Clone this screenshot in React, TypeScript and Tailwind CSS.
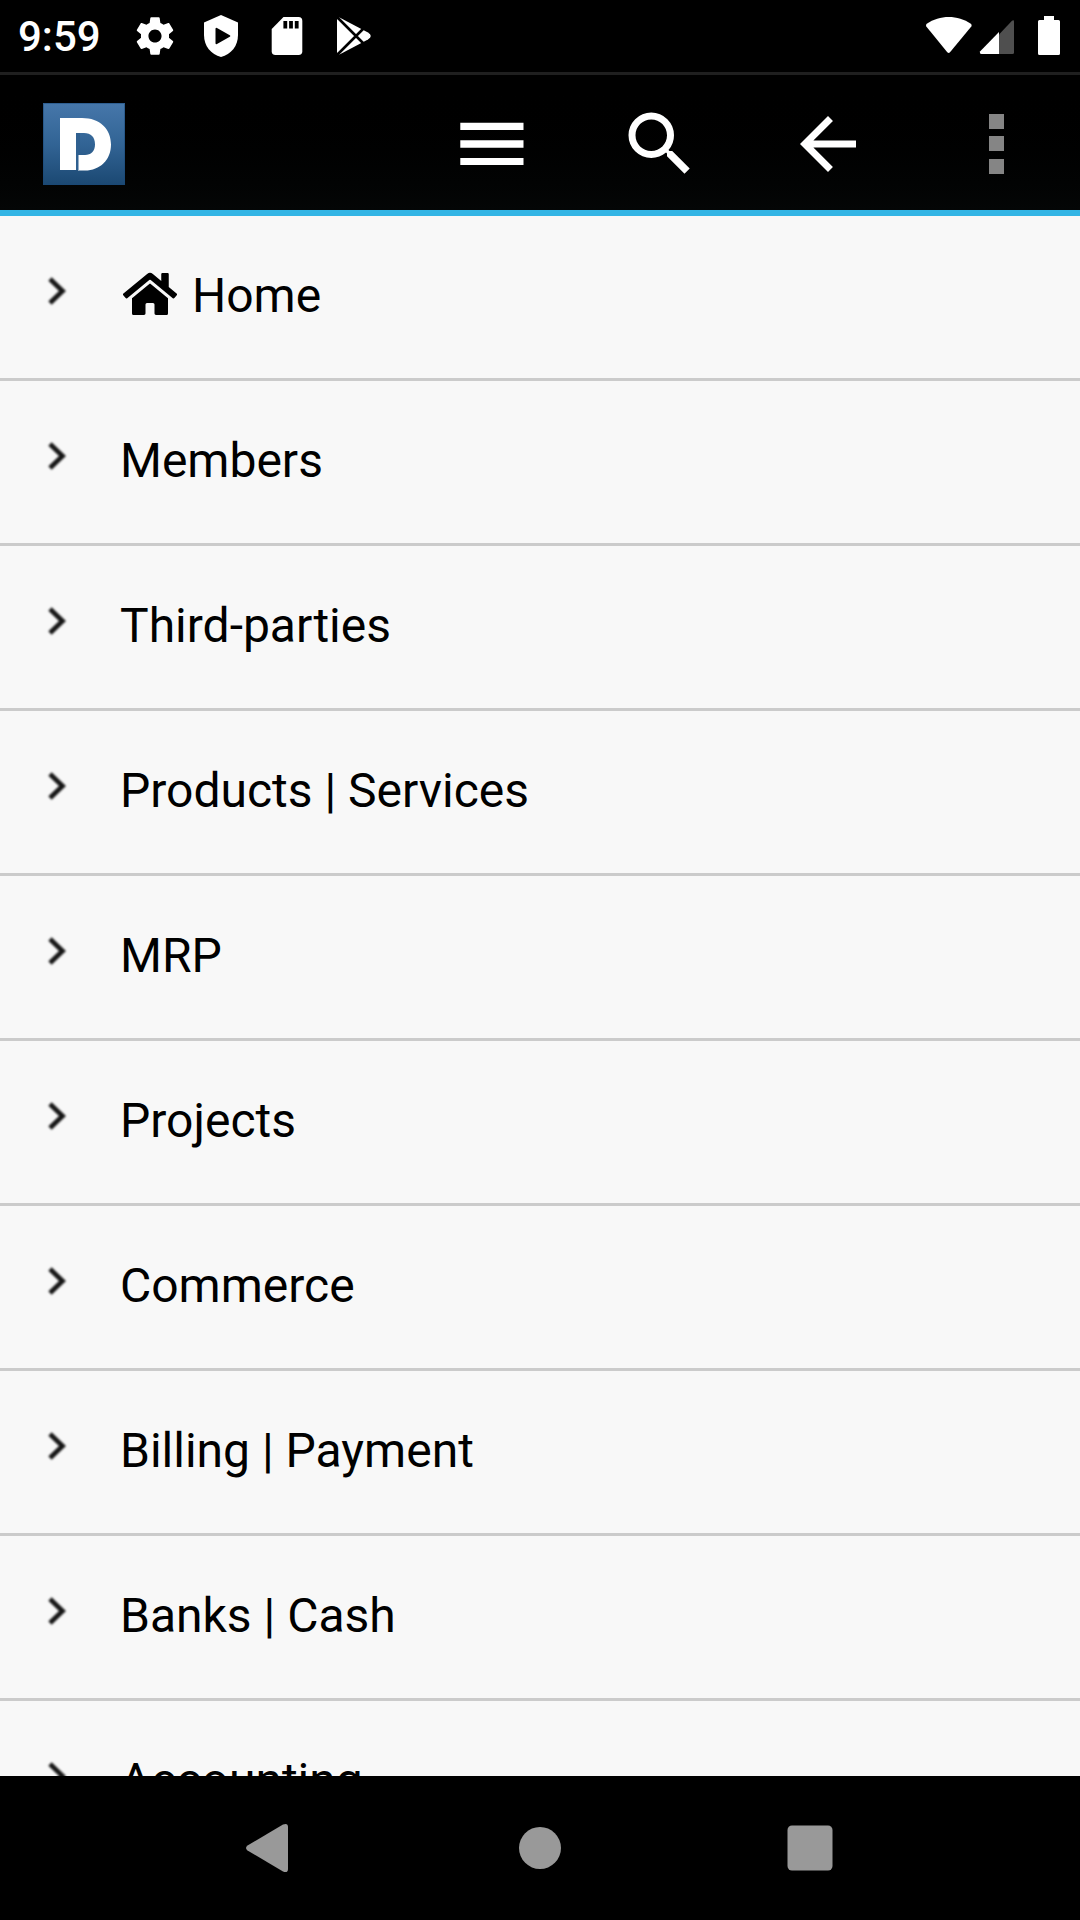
import type { ReactNode } from "react";

const modules = [
  "Home",
  "Members",
  "Third-parties",
  "Products | Services",
  "MRP",
  "Projects",
  "Commerce",
  "Billing | Payment",
  "Banks | Cash",
  "Accounting",
];

function StatusBar() {
  return (
    <header className="flex h-[75px] shrink-0 items-start justify-between border-b-[3px] border-[#1f1f1f] bg-black pl-[18px] pr-[20px]">
      <div className="flex h-[72px] items-center">
        <span className="w-[108px] pt-[2px] text-[42px] leading-[72px] font-medium text-white">9:59</span>
        <svg className="ml-[6px] h-[72px] w-[46px]" viewBox="132 0 46 72" fill="#fff">
          <g transform="translate(132.5 13.5) scale(1.875)">
            <path d="M19.43 12.98c.04-.32.07-.64.07-.98s-.03-.66-.07-.98l2.11-1.65c.19-.15.24-.42.12-.64l-2-3.46c-.12-.22-.39-.3-.61-.22l-2.49 1c-.52-.4-1.08-.73-1.69-.98l-.38-2.65C14.46 2.18 14.25 2 14 2h-4c-.25 0-.46.18-.49.42l-.38 2.65c-.61.25-1.17.59-1.69.98l-2.49-1c-.23-.09-.49 0-.61.22l-2 3.46c-.13.22-.07.49.12.64l2.11 1.65c-.04.32-.07.65-.07.98s.03.66.07.98l-2.11 1.65c-.19.15-.24.42-.12.64l2 3.46c.12.22.39.3.61.22l2.49-1c.52.4 1.08.73 1.69.98l.38 2.65c.03.24.24.42.49.42h4c.25 0 .46-.18.49-.42l.38-2.65c.61-.25 1.17-.59 1.69-.98l2.49 1c.23.09.49 0 .61-.22l2-3.46c.12-.22.07-.49-.12-.64l-2.11-1.65zM12 15.5c-1.93 0-3.5-1.57-3.5-3.5s1.57-3.5 3.5-3.5 3.5 1.57 3.5 3.5-1.57 3.5-3.5 3.5z" />
          </g>
        </svg>
        <svg className="ml-[22px] h-[72px] w-[42px]" viewBox="200 0 42 72">
          <path d="M221 15L238 22.5V35C238 46 231 54.5 221 57C211 54.5 204 46 204 35V22.5Z" fill="#fff" />
          <path d="M216.5 28.8V43.2L229.3 36Z" fill="#000" stroke="#000" strokeWidth="2" strokeLinejoin="round" />
        </svg>
        <svg className="ml-[26px] h-[72px] w-[38px]" viewBox="268 0 38 72">
          <path d="M283.5 17H298.5Q302.3 17 302.3 20.8V51.2Q302.3 55 298.5 55H275.5Q271.7 55 271.7 51.2V29Z" fill="#fff" />
          <path d="M283.4 21h3.8v7.6h-3.8zM289.1 21h3.8v7.6h-3.8zM294.8 21h3.8v7.6h-3.8z" fill="#000" />
        </svg>
        <svg className="ml-[26px] h-[72px] w-[44px]" viewBox="332 0 44 72">
          <path d="M339.5 17.5L368 32.5Q373.5 36 368 39.5L339.5 54.5L337 52.5V19.5Z" fill="#fff" />
          <path d="M335 15L365.5 45.5M335 57L365.5 26.5" stroke="#000" strokeWidth="2.6" fill="none" />
        </svg>
      </div>
      <div className="flex h-[72px] items-center">
        <svg className="h-[72px] w-[50px]" viewBox="924 0 50 72" fill="#fff">
          <path d="M926.3 26.5Q925.3 25 926.8 23.8C939.5 14.8 958 14.8 970.8 23.8Q972.3 25 971.3 26.5L950 52.2Q948.7 53.6 947.3 52.2Z" />
        </svg>
        <svg className="ml-[4px] h-[72px] w-[38px]" viewBox="978 0 38 72">
          <path d="M999 34.5L1012 20.7Q1014 19.5 1014 21.5V52.5Q1014 54 1012.5 54H999Z" fill="#4f4f4f" />
          <path d="M999 32V54H981.5Q979.5 54 980 51.5Z" fill="#fff" />
        </svg>
        <svg className="ml-[20px] h-[72px] w-[24px]" viewBox="1036 0 24 72" fill="#fff">
          <path d="M1044 16h10v4h4.5q1.5 0 1.5 1.5v32q0 1.500-1.500 1.500h-19q-1.500 0-1.500-1.500v-32q0-1.500 1.500-1.500h4.500z" />
        </svg>
      </div>
    </header>
  );
}

function Action({ children, label }: { children: ReactNode; label: string }) {
  return (
    <button aria-label={label} className="flex h-[135px] w-[168px] items-center justify-center">
      {children}
    </button>
  );
}

function Toolbar() {
  return (
    <div className="flex h-[141px] shrink-0 justify-between border-b-[6px] border-[#33b5e5] bg-linear-to-b from-black to-[#040606] pl-[43px]">
      <svg className="mt-[28px] size-[82px]" viewBox="0 0 82 82">
        <defs>
          <linearGradient id="logo-blue" x1="0" y1="0" x2="0" y2="1">
            <stop offset="0" stopColor="#4677aa" />
            <stop offset="0.5" stopColor="#326495" />
            <stop offset="1" stopColor="#1b4872" />
          </linearGradient>
        </defs>
        <rect width="82" height="82" fill="url(#logo-blue)" />
        <rect x="0.5" y="0.5" width="81" height="81" fill="none" stroke="#174878" strokeOpacity="0.5" />
        <path d="M17 15H39C57 15 68 26 68 41.5C68 57 57 67.5 42 67.5H35V52H42C48 52 52 48 52 41.5C52 34 48 30 41 30H33V67H17Z" fill="#fff" />
        <path d="M33 30V67H35.500V52H37V30Z" fill="#2f6090" />
      </svg>
      <div className="flex pt-[1.5px]">
        <Action label="Menu">
          <svg className="size-[84px]" viewBox="0 0 84 84" fill="#fff">
            <path d="M10.300 20.800h63.200v7.200h-63.200zM10.300 38.300h63.200v7.500h-63.200zM10.300 56h63.200v7h-63.200z" />
          </svg>
        </Action>
        <Action label="Search">
          <svg className="size-[84px]" viewBox="0 0 24 24" fill="#fff">
            <path d="M15.5 14h-.79l-.28-.27A6.471 6.471 0 0 0 16 9.5 6.5 6.5 0 1 0 9.5 16c1.61 0 3.09-.59 4.23-1.57l.27.28v.79l5 4.99L20.49 19l-4.99-5zm-6 0C7.01 14 5 11.99 5 9.5S7.01 5 9.5 5 14 7.01 14 9.5 11.99 14 9.5 14z" />
          </svg>
        </Action>
        <Action label="Back">
          <svg className="size-[84px]" viewBox="0 0 24 24" fill="#fff">
            <path d="M20 11H7.83l5.59-5.59L12 4l-8 8 8 8 1.41-1.41L7.83 13H20v-2z" />
          </svg>
        </Action>
        <Action label="More">
          <svg className="size-[84px]" viewBox="0 0 84 84" fill="#858585" shapeRendering="crispEdges">
            <path d="M35 12h15v15H35zM35 34h15v15H35zM35 57h15v15H35z" />
          </svg>
        </Action>
      </div>
    </div>
  );
}

function Row({ name }: { name: string }) {
  return (
    <li className="flex h-[165px] shrink-0 items-start border-b-[3px] border-[#cbcbcb] pl-[45px]">
      <svg className="mt-[58px] h-[34px] w-[26px] blur-[0.8px]" viewBox="0 0 26 34" fill="none" stroke="#161616" strokeWidth="4.8">
        <path d="M5 5L17.500 17L5 29" />
      </svg>
      <div className="ml-[49px] flex items-start">
        {name === "Home" && (
          <svg className="mt-[54px] mr-[15px] ml-[3px] h-[48px] w-[54px]" viewBox="0 0 576 512" fill="#000">
            <path d="M280.37 148.26L96 300.11V464a16 16 0 0 0 16 16l112.06-.29a16 16 0 0 0 15.92-16V368a16 16 0 0 1 16-16h64a16 16 0 0 1 16 16v95.64a16 16 0 0 0 16 16.05L464 480a16 16 0 0 0 16-16V300L295.67 148.26a12.19 12.19 0 0 0-15.3 0zM571.6 251.47L488 182.56V44.05a12 12 0 0 0-12-12h-56a12 12 0 0 0-12 12v72.61L318.47 43a48 48 0 0 0-61 0L4.34 251.47a12 12 0 0 0-1.6 16.9l25.5 31A12 12 0 0 0 45.15 301l235.22-193.74a12.19 12.19 0 0 1 15.3 0L530.9 301a12 12 0 0 0 16.9-1.6l25.5-31a12 12 0 0 0-1.7-16.93z" />
          </svg>
        )}
        <span className="pt-[48px] text-[48px] leading-[64px] text-black">{name}</span>
      </div>
    </li>
  );
}

function NavigationBar() {
  return (
    <nav className="flex h-[144px] shrink-0 items-center justify-center gap-[210px] bg-black">
      <svg className="size-[60px]" viewBox="240 1818 60 60" fill="#999">
        <path d="M283 1824.5Q288 1822.5 288 1827V1869Q288 1873.5 283 1871.5L247.5 1850.5Q244.5 1848 247.5 1845.5Z" />
      </svg>
      <svg className="size-[60px]" viewBox="0 0 60 60" fill="#999">
        <circle cx="30" cy="30" r="21" />
      </svg>
      <svg className="size-[60px]" viewBox="0 0 60 60" fill="#999">
        <rect x="7.5" y="7.5" width="45" height="45" rx="4.5" />
      </svg>
    </nav>
  );
}

export default function App() {
  return (
    <div className="flex h-[1920px] w-[1080px] flex-col overflow-hidden bg-black font-['Roboto',sans-serif]">
      <StatusBar />
      <Toolbar />
      <ul className="flex min-h-0 flex-1 flex-col overflow-hidden bg-[#f8f8f8]">
        {modules.map((name) => (
          <Row key={name} name={name} />
        ))}
      </ul>
      <NavigationBar />
    </div>
  );
}
